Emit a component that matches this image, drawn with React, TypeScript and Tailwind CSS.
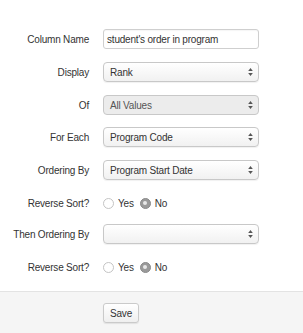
import React from "react";

const font = { fontFamily: '"Liberation Sans", Arial, Helvetica, sans-serif' };

function Arrows() {
  return (
    <svg width="5" height="9" viewBox="0 0 5 9" className="absolute right-[5px] top-1/2 -translate-y-1/2">
      <path d="M2.5 0.5 L4.8 3.6 L0.2 3.6 Z" fill="#555" />
      <path d="M2.5 8.5 L4.8 5.4 L0.2 5.4 Z" fill="#555" />
    </svg>
  );
}

function Select({ value, disabled }: { value: string; disabled?: boolean }) {
  return (
    <div
      className={
        "relative h-[20px] w-[156px] rounded-[4px] border border-[#c8c8c8] flex items-center pl-[6px] text-[10px] tracking-[-0.2px] " +
        (disabled
          ? "bg-[#ececec] text-[#555]"
          : "bg-gradient-to-b from-[#ffffff] to-[#f1f1f1] text-[#333] shadow-[0_1px_1px_rgba(0,0,0,0.06)]")
      }
    >
      {value}
      <Arrows />
    </div>
  );
}

function Radio({ checked }: { checked?: boolean }) {
  return checked ? (
    <span className="w-[11px] h-[11px] rounded-full bg-[#9a9a9a] border border-[#8a8a8a] flex items-center justify-center">
      <span className="w-[4px] h-[4px] rounded-full bg-[#e8e8e8]" />
    </span>
  ) : (
    <span className="w-[11px] h-[11px] rounded-full bg-white border border-[#c4c4c4]" />
  );
}

function Radios() {
  return (
    <div className="h-[18px] flex items-center text-[10px] tracking-[-0.2px] text-[#333]">
      <Radio />
      <span className="ml-[4px]">Yes</span>
      <span className="ml-[6px]"><Radio checked /></span>
      <span className="ml-[4px]">No</span>
    </div>
  );
}

function Row({ label, children, mt }: { label: string; children: React.ReactNode; mt: string }) {
  return (
    <div className={"flex items-center " + mt}>
      <div className="w-[89px] text-right text-[10px] tracking-[-0.2px] text-[#333]">{label}</div>
      <div className="ml-[14px]">{children}</div>
    </div>
  );
}

export default function App() {
  return (
    <div className="w-[303px] h-[333px] bg-white flex flex-col" style={font}>
      <div className="pt-[29px] flex flex-col">
        <Row label="Column Name" mt="mt-0">
          <div className="h-[20px] w-[156px] rounded-[3px] border border-[#cfcfcf] bg-white flex items-center pl-[3px] text-[10px] tracking-[-0.2px] text-[#333] shadow-[inset_0_1px_1px_rgba(0,0,0,0.04)]">
            student's order in program
          </div>
        </Row>
        <Row label="Display" mt="mt-[13px]">
          <Select value="Rank" />
        </Row>
        <Row label="Of" mt="mt-[13px]">
          <Select value="All Values" disabled />
        </Row>
        <Row label="For Each" mt="mt-[12px]">
          <Select value="Program Code" />
        </Row>
        <Row label="Ordering By" mt="mt-[13px]">
          <Select value="Program Start Date" />
        </Row>
        <Row label="Reverse Sort?" mt="mt-[14px]">
          <Radios />
        </Row>
        <Row label="Then Ordering By" mt="mt-[12px]">
          <Select value="" />
        </Row>
        <Row label="Reverse Sort?" mt="mt-[14px]">
          <Radios />
        </Row>
      </div>
      <div className="mt-[15px] flex-1 bg-[#f5f5f5] border-t border-[#e3e3e3] pt-[11px] pl-[103px]">
        <button className="h-[20px] w-[36px] rounded-[3px] border border-[#cacaca] bg-gradient-to-b from-[#ffffff] to-[#efefef] text-[10px] tracking-[-0.2px] text-[#333] shadow-[0_1px_1px_rgba(0,0,0,0.08)] flex items-center justify-center">
          Save
        </button>
      </div>
    </div>
  );
}
